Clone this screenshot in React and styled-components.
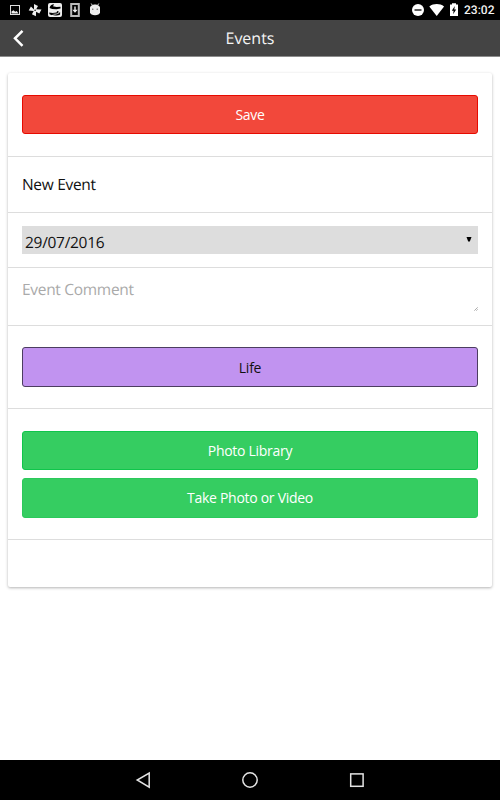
import React from "react";
import styled, { createGlobalStyle } from "styled-components";

const GlobalStyle = createGlobalStyle`
  * {
    box-sizing: border-box;
  }
  body {
    margin: 0;
    background-color: white;
    font-family: "Open Sans", "Noto Sans", sans-serif;
    text-rendering: geometricPrecision;
  }
`;

const Screen = styled.div`
  display: flex;
  flex-direction: column;
  height: 800px;
  width: 500px;
  overflow: hidden;
`;

const StatusBar = styled.div`
  display: flex;
  justify-content: space-between;
  height: 20px;
  background-color: black;
  svg {
    display: block;
  }
`;

const Clock = styled.span`
  width: 36px;
  color: #f2f2f2;
  font-family: Roboto, sans-serif;
  font-size: 12px;
  font-weight: 500;
  line-height: 21px;
  white-space: nowrap;
`;

const StatusGroup = styled.div`
  display: flex;
`;

const Header = styled.header`
  display: grid;
  grid-template-columns: 40px 1fr 40px;
  align-items: center;
  height: 37px;
  background-color: #444;
  border-bottom: 1px solid #8c8c8c;
  h1 {
    margin: 0;
    color: #f4f4f4;
    font-size: 16px;
    font-weight: 400;
    line-height: 36px;
    text-align: center;
  }
`;

const BackButton = styled.button`
  padding: 0;
  border: none;
  background: none;
  height: 36px;
  svg {
    display: block;
  }
`;

const Content = styled.main`
  flex: 1;
  padding: 16px 8px 0;
`;

const Card = styled.section`
  border-radius: 2px;
  background-color: white;
  box-shadow: 0 1px 3px rgba(0, 0, 0, 0.3);
`;

const Row = styled.div`
  display: flex;
  flex-direction: column;
  gap: 8px;
  height: ${(props) => props.$height}px;
  padding: ${(props) => props.$top || 0}px 14px 0;
  border-bottom: ${(props) => (props.$last ? "none" : "1px solid #ddd")};
`;

const Button = styled.button`
  height: ${(props) => props.$height || 39}px;
  padding: 0;
  border: 1px solid ${(props) => props.$border};
  border-radius: 3px;
  background-color: ${(props) => props.$color};
  color: ${(props) => (props.$dark ? "#111" : "white")};
  font-family: inherit;
  font-size: 14px;
  letter-spacing: -0.28px;
  line-height: 37px;
`;

const Field = styled.div`
  color: ${(props) => (props.$placeholder ? "#aaa" : "#111")};
  font-size: 15.5px;
  letter-spacing: -0.3px;
  line-height: 20px;
`;

const DateSelect = styled.div`
  display: flex;
  justify-content: space-between;
  height: 28px;
  padding: 6px 6px 0 3px;
  background-color: #ddd;
  color: #111;
  font-size: 15.5px;
  letter-spacing: -0.3px;
  line-height: 20px;
  svg {
    margin-top: 5px;
  }
`;

const Comment = styled.div`
  display: flex;
  justify-content: space-between;
  svg {
    margin-top: 28px;
  }
`;

const NavBar = styled.nav`
  height: 40px;
  background-color: black;
  svg {
    display: block;
  }
`;

function NotificationIcons() {
  return (
    <svg width="110" height="20" viewBox="0 0 110 20" fill="#eee">
      <rect x="10.5" y="5.5" width="9" height="9" fill="none" stroke="#ddd" />
      <path d="M11.5 13.5v-2l2-1.3 1.7 1.6 1.5-.8 1.8 2.5z" />
      <path d="M34 9.5V4l4 2-1.8 3.2 5.3.3-2.2 4-3.2-1.8-.2 4.5-4-2 1.8-3.2-5-.5 2.2-4z" />
      <circle cx="35.1" cy="10.2" r="0.8" fill="black" />
      <rect x="48" y="3" width="14" height="14" rx="2" />
      <path
        d="M49.6 8c.2-2.5 2-3.8 4.5-3.8L53 6.3l3.5.8 4-.4v1.8l-4 .7-4.3-.3zM49.2 12.4l3.5.5 3.8-.5.7-1.5 1.8.9-1.7 1.7-5.5.6c2 .8 5 .5 6.7-.6l1.6-1.6v2.6c-2 1.4-8 1.3-10.6-.2z"
        fill="black"
      />
      <rect x="71.2" y="4" width="7.6" height="12" fill="none" stroke="#bbb" strokeWidth="2" />
      <path d="M74.3 6.5h1.4v3.3h2L75 12.7l-2.7-2.9h2z" />
      <path d="M90 8.2c0-5 10-5 10 0z" />
      <path d="M90 9h10v3.2c0 4-10 4-10 0z" />
      <rect x="90" y="7.5" width="10" height="3" />
      <path d="M91.2 3.5l1.5 2.3M98.8 3.5l-1.5 2.3" stroke="#ddd" />
      <circle cx="92.8" cy="9.2" r="0.6" fill="#333" />
      <circle cx="97.2" cy="9.2" r="0.6" fill="#333" />
    </svg>
  );
}

function SystemIcons() {
  return (
    <svg width="64" height="20" viewBox="400 0 64 20" fill="white">
      <circle cx="418" cy="10" r="6" />
      <rect x="414.5" y="9.2" width="7" height="1.6" fill="#333" />
      <path d="M429.3 6.4c4.5-3.2 10.4-3.2 14.8 0L436.7 16z" />
      <path d="M450 4.5h2V3.2h4v1.3h2V16h-8z" />
      <path d="M454.8 6l-3 4.8h1.8l-.5 3.5 3.1-4.9h-1.9z" fill="black" />
    </svg>
  );
}

function StatusIcons() {
  return (
    <StatusBar>
      <NotificationIcons />
      <StatusGroup>
        <SystemIcons />
        <Clock>23:02</Clock>
      </StatusGroup>
    </StatusBar>
  );
}

export default function App() {
  return (
    <>
      <GlobalStyle />
      <Screen>
        <StatusIcons />
        <Header>
          <BackButton aria-label="Back">
            <svg width="40" height="36" viewBox="0 0 40 36">
              <path d="M22.5 10.8L15 18.3l7.5 7.5" fill="none" stroke="white" strokeWidth="2.5" />
            </svg>
          </BackButton>
          <h1>Events</h1>
        </Header>
        <Content>
          <Card>
            <Row $height={84} $top={22}>
              <Button $color="#f2483b" $border="#e60a00">Save</Button>
            </Row>
            <Row $height={55.5} $top={17}>
              <Field>New Event</Field>
            </Row>
            <Row $height={55.5} $top={13.5}>
              <DateSelect>
                29/07/2016
                <svg width="6" height="5" viewBox="0 0 6 5">
                  <path d="M0.5 0h5L3.8 4.6H2.2z" fill="black" />
                </svg>
              </DateSelect>
            </Row>
            <Row $height={58} $top={11}>
              <Comment>
                <Field $placeholder>Event Comment</Field>
                <svg width="4" height="4" viewBox="0 0 4 4">
                  <path d="M0.3 3.7L3.7 0.3M2.3 3.7l1.4-1.4" stroke="#888" strokeWidth="0.7" />
                </svg>
              </Comment>
            </Row>
            <Row $height={83} $top={21.4}>
              <Button $height={39.4} $color="#c193f0" $border="#4c3d60" $dark>Life</Button>
            </Row>
            <Row $height={131} $top={22}>
              <Button $color="#35cd61" $border="#0fc54b">Photo Library</Button>
              <Button $height={39.5} $color="#35cd61" $border="#2bc95b">Take Photo or Video</Button>
            </Row>
            <Row $height={47} $last />
          </Card>
        </Content>
        <NavBar>
          <svg width="500" height="40" viewBox="0 0 500 40" fill="none" stroke="#e4e4e4" strokeWidth="1.5">
            <path d="M149.2 13v14.2L137.2 20z" />
            <circle cx="250" cy="20" r="7.2" />
            <rect x="350.7" y="13.9" width="12.4" height="12.4" />
          </svg>
        </NavBar>
      </Screen>
    </>
  );
}
